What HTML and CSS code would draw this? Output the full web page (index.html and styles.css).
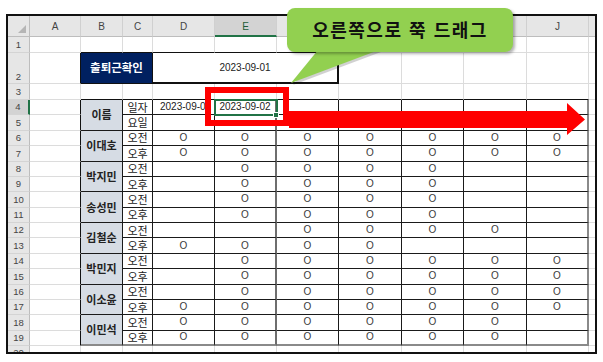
FILE: index.html
```html
<!DOCTYPE html>
<html lang="ko">
<head>
<meta charset="utf-8">
<title>출퇴근확인</title>
<link rel="stylesheet" href="styles.css">
</head>
<body>
<div class="stage">
  <div class="frame">
    <table class="sheet">
      <colgroup>
        <col class="w-rh"><col class="w-a"><col class="w-b"><col class="w-c"><col class="w-d"><col class="w-e"><col class="w-f"><col class="w-g"><col class="w-h"><col class="w-i"><col class="w-j"><col class="w-k">
      </colgroup>
      <tr class="hdr">
        <th class="corner"><span class="tri"></span></th><th>A</th><th>B</th><th>C</th><th>D</th><th class="hsel">E</th><th></th><th></th><th></th><th></th><th>J</th><th></th>
      </tr>
      <tr class="r1">
        <th class="rn">1</th><td></td><td class="eb"></td><td class="eb"></td><td class="eb"></td><td class="eb"></td><td class="eb"></td><td></td><td></td><td></td><td></td><td></td>
      </tr>
      <tr class="r2">
        <th class="rn bot">2</th><td class="er"></td><td class="title" colspan="2">출퇴근확인</td><td class="datebox" colspan="3">2023-09-01</td><td></td><td></td><td></td><td></td><td></td>
      </tr>
      <tr class="r3">
        <th class="rn">3</th><td></td><td class="eb"></td><td class="eb"></td><td class="eb"></td><td class="eb"></td><td class="eb"></td><td class="eb"></td><td class="eb"></td><td class="eb"></td><td class="eb"></td><td></td>
      </tr>
      <tr class="r">
        <th class="rn rsel">4</th><td class="er"></td><td class="x nm" rowspan="2">이름</td><td class="x lb">일자</td><td class="x dclip">2023-09-01</td><td class="x ex sel">2023-09-02<span class="handle"></span></td><td class="x"></td><td class="x"></td><td class="x"></td><td class="x"></td><td class="x jx"></td><td></td>
      </tr>
      <tr class="r">
        <th class="rn">5</th><td class="er"></td><td class="x lb">요일</td><td class="x"></td><td class="x ex"></td><td class="x"></td><td class="x"></td><td class="x"></td><td class="x"></td><td class="x jx"></td><td></td>
      </tr>
      <tr class="r">
        <th class="rn">6</th><td class="er"></td><td class="x nm" rowspan="2">이대호</td><td class="x lb">오전</td><td class="x o">O</td><td class="x ex o">O</td><td class="x o">O</td><td class="x o">O</td><td class="x o">O</td><td class="x o">O</td><td class="x jx o">O</td><td></td>
      </tr>
      <tr class="r">
        <th class="rn">7</th><td class="er"></td><td class="x lb">오후</td><td class="x o">O</td><td class="x ex o">O</td><td class="x o">O</td><td class="x o">O</td><td class="x o">O</td><td class="x o">O</td><td class="x jx o">O</td><td></td>
      </tr>
      <tr class="r">
        <th class="rn">8</th><td class="er"></td><td class="x nm" rowspan="2">박지민</td><td class="x lb">오전</td><td class="x"></td><td class="x ex o">O</td><td class="x o">O</td><td class="x o">O</td><td class="x o">O</td><td class="x"></td><td class="x jx"></td><td></td>
      </tr>
      <tr class="r">
        <th class="rn">9</th><td class="er"></td><td class="x lb">오후</td><td class="x"></td><td class="x ex o">O</td><td class="x o">O</td><td class="x o">O</td><td class="x o">O</td><td class="x"></td><td class="x jx"></td><td></td>
      </tr>
      <tr class="r">
        <th class="rn">10</th><td class="er"></td><td class="x nm" rowspan="2">송성민</td><td class="x lb">오전</td><td class="x"></td><td class="x ex o">O</td><td class="x o">O</td><td class="x o">O</td><td class="x o">O</td><td class="x"></td><td class="x jx"></td><td></td>
      </tr>
      <tr class="r">
        <th class="rn">11</th><td class="er"></td><td class="x lb">오후</td><td class="x"></td><td class="x ex o">O</td><td class="x o">O</td><td class="x o">O</td><td class="x o">O</td><td class="x"></td><td class="x jx"></td><td></td>
      </tr>
      <tr class="r">
        <th class="rn">12</th><td class="er"></td><td class="x nm" rowspan="2">김철순</td><td class="x lb">오전</td><td class="x"></td><td class="x ex"></td><td class="x o">O</td><td class="x o">O</td><td class="x o">O</td><td class="x o">O</td><td class="x jx"></td><td></td>
      </tr>
      <tr class="r">
        <th class="rn">13</th><td class="er"></td><td class="x lb">오후</td><td class="x o">O</td><td class="x ex o">O</td><td class="x o">O</td><td class="x o">O</td><td class="x"></td><td class="x"></td><td class="x jx"></td><td></td>
      </tr>
      <tr class="r">
        <th class="rn">14</th><td class="er"></td><td class="x nm" rowspan="2">박민지</td><td class="x lb">오전</td><td class="x"></td><td class="x ex o">O</td><td class="x o">O</td><td class="x o">O</td><td class="x o">O</td><td class="x o">O</td><td class="x jx o">O</td><td></td>
      </tr>
      <tr class="r">
        <th class="rn">15</th><td class="er"></td><td class="x lb">오후</td><td class="x"></td><td class="x ex o">O</td><td class="x o">O</td><td class="x o">O</td><td class="x o">O</td><td class="x o">O</td><td class="x jx o">O</td><td></td>
      </tr>
      <tr class="r">
        <th class="rn">16</th><td class="er"></td><td class="x nm" rowspan="2">이소윤</td><td class="x lb">오전</td><td class="x"></td><td class="x ex o">O</td><td class="x o">O</td><td class="x o">O</td><td class="x o">O</td><td class="x o">O</td><td class="x jx o">O</td><td></td>
      </tr>
      <tr class="r">
        <th class="rn">17</th><td class="er"></td><td class="x lb">오후</td><td class="x o">O</td><td class="x ex o">O</td><td class="x o">O</td><td class="x o">O</td><td class="x o">O</td><td class="x o">O</td><td class="x jx o">O</td><td></td>
      </tr>
      <tr class="r">
        <th class="rn">18</th><td class="er"></td><td class="x nm lastb" rowspan="2">이민석</td><td class="x lb">오전</td><td class="x o">O</td><td class="x ex o">O</td><td class="x o">O</td><td class="x o">O</td><td class="x o">O</td><td class="x o">O</td><td class="x jx"></td><td></td>
      </tr>
      <tr class="r last">
        <th class="rn">19</th><td class="er"></td><td class="x lb">오후</td><td class="x o">O</td><td class="x ex o">O</td><td class="x o">O</td><td class="x o">O</td><td class="x o">O</td><td class="x o">O</td><td class="x jx"></td><td></td>
      </tr>
      <tr class="r20">
        <th class="rn">20</th><td></td><td></td><td></td><td></td><td></td><td></td><td></td><td></td><td></td><td></td><td></td>
      </tr>
    </table>
  </div>

  <div class="redbox"></div>
  <svg class="overlay" width="603" height="362" viewBox="0 0 603 362" aria-hidden="true">
    <polygon class="arrow" points="289,111 567,111 567,103 585,119.5 567,135 567,128 289,128"/>
    <polygon class="tail-shadow" points="320,52 381,52 293,85"/>
    <polygon class="tail" points="318,50 379,50 291,83"/>
  </svg>
  <div class="callout">오른쪽으로 쭉 드래그</div>
</div>
</body>
</html>
```

FILE: styles.css
```css
* { box-sizing: border-box; }
html, body { margin: 0; padding: 0; background: #fff; }
body {
  font-family: "Liberation Sans", "Noto Sans CJK KR", sans-serif;
  color: #222;
}
.stage {
  position: relative;
  width: 603px;
  height: 362px;
  overflow: hidden;
  padding: 14px 0 0 6px;
}
.frame {
  width: 591px;
  height: 340px;
  border: 2px solid #111;
  overflow: hidden;
}
.sheet {
  border-collapse: separate;
  border-spacing: 0;
  table-layout: fixed;
  width: 601px;
}
.w-rh { width: 22px; }
.w-a { width: 51px; }
.w-b { width: 42px; }
.w-c { width: 30px; }
.w-d, .w-e, .w-f, .w-h, .w-j { width: 62px; }
.w-g, .w-i { width: 63px; }
.w-k { width: 20px; }

.sheet td, .sheet th {
  padding: 0;
  border: 0;
  border-right: 1px solid #dcdcdc;
  border-bottom: 1px solid #dcdcdc;
  text-align: center;
  vertical-align: middle;
  white-space: nowrap;
  font-size: 10px;
  font-weight: normal;
  line-height: 1;
}

/* headers */
.hdr th {
  height: 21px;
  background: #e6e6e6;
  color: #444;
  font-size: 10px;
  border-right: 1px solid #d0d0d0;
  border-bottom: 1px solid #bdbdbd;
  padding-top: 2px;
}
.hdr th.corner { position: relative; border-right-color: #bdbdbd; }
.tri {
  position: absolute;
  right: 3px;
  bottom: 3px;
  width: 0;
  height: 0;
  border-left: 8px solid transparent;
  border-bottom: 8px solid #b5b5b5;
}
.hdr th.hsel {
  background: #d3d3d3;
  color: #1e5e38;
  border-bottom: 2px solid #217346;
}
.sheet th.rn {
  background: #e6e6e6;
  color: #444;
  font-size: 9.5px;
  border-right: 1px solid #bdbdbd;
  border-bottom: 1px solid #d4d4d4;
}
.sheet th.rn.bot { vertical-align: bottom; padding-bottom: 2px; }
.sheet th.rsel {
  background: #d3d3d3;
  border-right: 2px solid #217346;
}

/* rows */
.r1 td, .r1 th { height: 16px; }
.r2 td, .r2 th { height: 31px; }
.r3 td, .r3 th { height: 16px; }
.r td, .r th { height: 15.375px; }
.r20 td, .r20 th { height: 15px; }

/* edges of bordered regions */
.sheet td.eb { border-bottom: 1px solid #111; }
.sheet td.er { border-right: 1px solid #111; }

.sheet td.title {
  background: #002060;
  color: #fff;
  font-family: "Noto Sans CJK KR", sans-serif;
  font-weight: bold;
  font-size: 11.5px;
  border-right: 1px solid #111;
  border-bottom: 1px solid #111;
}
.sheet td.datebox {
  font-size: 10px;
  color: #222;
  border-right: 2px solid #111;
  border-bottom: 2px solid #111;
}

.sheet td.x {
  border-right: 1px solid #1a1a1a;
  border-bottom: 1px solid #1a1a1a;
  color: #222;
  font-size: 10px;
}
.sheet td.lb {
  font-family: "Noto Sans CJK KR", sans-serif;
  font-size: 11px;
  color: #222;
}
.sheet td.nm {
  background: #d6dce4;
  font-family: "Noto Sans CJK KR", sans-serif;
  font-weight: bold;
  font-size: 11px;
  color: #222;
}
.sheet td.x.ex { border-right: 2px solid #6e6e6e; }
.sheet td.x.jx { border-right: 2px solid #8a8a8a; }
.sheet tr.last td.x, .sheet td.x.lastb { border-bottom: 2px solid #8a8a8a; }
.sheet td.o { color: #3a3a3a; font-size: 10px; }

.sheet td.dclip { text-align: left; padding-left: 7px; overflow: hidden; text-overflow: clip; }
.sheet td.sel {
  position: relative;
  outline: 2px solid #217346;
  outline-offset: -1px;
}
.handle {
  position: absolute;
  right: -4px;
  bottom: -4px;
  width: 6px;
  height: 6px;
  background: #217346;
  border: 1px solid #fff;
}

/* overlays */
.redbox {
  position: absolute;
  left: 205px;
  top: 87px;
  width: 84px;
  height: 39px;
  border: 6px solid #ff0000;
}
.overlay {
  position: absolute;
  left: 0;
  top: 0;
}
.arrow { fill: #ff0000; }
.tail { fill: #92d050; }
.tail-shadow { fill: rgba(0, 0, 0, 0.18); }
.callout {
  position: absolute;
  left: 287px;
  top: 8px;
  width: 226px;
  height: 44px;
  border-radius: 8px;
  background: #92d050;
  box-shadow: 2px 2px 3px rgba(0, 0, 0, 0.3);
  font-family: "Noto Sans CJK KR", sans-serif;
  font-weight: bold;
  font-size: 18px;
  letter-spacing: 1.5px;
  color: #111;
  display: flex;
  align-items: center;
  justify-content: center;
  padding-bottom: 2px;
}
```
